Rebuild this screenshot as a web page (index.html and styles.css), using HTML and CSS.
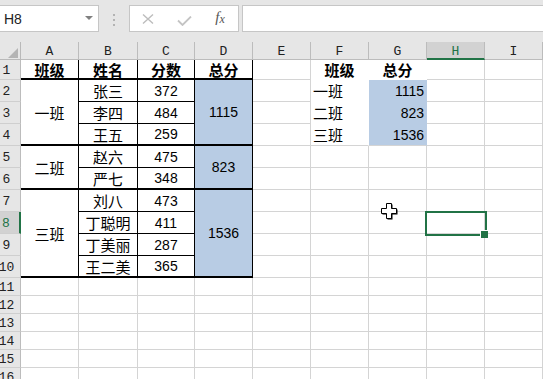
FILE: index.html
```html
<!DOCTYPE html>
<html lang="zh">

<head>
    <meta charset="utf-8">
    <meta name="viewport" content="width=device-width, initial-scale=1.0">
    <title>班级总分</title>
    <link rel="stylesheet" href="styles.css">
</head>

<body>

    <header class="formula-bar">
        <div class="name-box">H8<span class="caret"></span></div>
        <div class="grip"><i></i><i></i><i></i></div>
        <div class="fx-box">
            <span class="fx-btn">
                <svg width="12" height="10" viewBox="0 0 12 10"><path d="M1 0.5 L11 9.5 M11 0.5 L1 9.5" stroke="#bdbdbd" stroke-width="1.4" fill="none"/></svg>
            </span>
            <span class="fx-btn check">
                <svg width="15" height="10" viewBox="0 0 15 10"><path d="M1 4.5 L5.5 9 L14 0.5" stroke="#c4c4c4" stroke-width="1.8" fill="none"/></svg>
            </span>
            <span class="fx-btn fx"><i>f</i><i class="x">x</i></span>
        </div>
        <div class="formula-input"></div>
    </header>

    <section class="sheet">
        <div class="corner"></div>
        <div class="hd">A</div>
        <div class="hd">B</div>
        <div class="hd">C</div>
        <div class="hd">D</div>
        <div class="hd">E</div>
        <div class="hd">F</div>
        <div class="hd">G</div>
        <div class="hd on">H</div>
        <div class="hd">I</div>

        <!-- 1 -->
        <div class="rh">1</div>
        <div class="cell box end zh bold">班级</div>
        <div class="cell box end zh bold">姓名</div>
        <div class="cell box end zh bold">分数</div>
        <div class="cell box end zh bold">总分</div>
        <div class="cell"></div>
        <div class="cell plain zh bold">班级</div>
        <div class="cell plain zh bold">总分</div>
        <div class="cell"></div>
        <div class="cell"></div>

        <!-- 2 -->
        <div class="rh">2</div>
        <div class="cell box end zh span3">一班</div>
        <div class="cell box zh">张三</div>
        <div class="cell box">372</div>
        <div class="cell box end blue span3">1115</div>
        <div class="cell"></div>
        <div class="cell plain zh left">一班</div>
        <div class="cell plain blue right">1115</div>
        <div class="cell"></div>
        <div class="cell"></div>

        <!-- 3 -->
        <div class="rh">3</div>
        <div class="cell box zh">李四</div>
        <div class="cell box">484</div>
        <div class="cell"></div>
        <div class="cell plain zh left">二班</div>
        <div class="cell plain blue right">823</div>
        <div class="cell"></div>
        <div class="cell"></div>

        <!-- 4 -->
        <div class="rh">4</div>
        <div class="cell box end zh">王五</div>
        <div class="cell box end">259</div>
        <div class="cell"></div>
        <div class="cell plain gl zh left">三班</div>
        <div class="cell plain gl blue right">1536</div>
        <div class="cell"></div>
        <div class="cell"></div>

        <!-- 5 -->
        <div class="rh">5</div>
        <div class="cell box end zh span2">二班</div>
        <div class="cell box zh">赵六</div>
        <div class="cell box">475</div>
        <div class="cell box end blue span2">823</div>
        <div class="cell"></div>
        <div class="cell"></div>
        <div class="cell"></div>
        <div class="cell"></div>
        <div class="cell"></div>

        <!-- 6 -->
        <div class="rh">6</div>
        <div class="cell box end zh">严七</div>
        <div class="cell box end">348</div>
        <div class="cell"></div>
        <div class="cell"></div>
        <div class="cell"></div>
        <div class="cell"></div>
        <div class="cell"></div>

        <!-- 7 -->
        <div class="rh">7</div>
        <div class="cell box end zh span4">三班</div>
        <div class="cell box zh">刘八</div>
        <div class="cell box">473</div>
        <div class="cell box end blue span4">1536</div>
        <div class="cell"></div>
        <div class="cell"></div>
        <div class="cell"></div>
        <div class="cell"></div>
        <div class="cell"></div>

        <!-- 8 -->
        <div class="rh on">8</div>
        <div class="cell box zh">丁聪明</div>
        <div class="cell box">411</div>
        <div class="cell"></div>
        <div class="cell"></div>
        <div class="cell"></div>
        <div class="cell sel"></div>
        <div class="cell"></div>

        <!-- 9 -->
        <div class="rh">9</div>
        <div class="cell box zh">丁美丽</div>
        <div class="cell box">287</div>
        <div class="cell"></div>
        <div class="cell"></div>
        <div class="cell"></div>
        <div class="cell"></div>
        <div class="cell"></div>

        <!-- 10 -->
        <div class="rh">10</div>
        <div class="cell box end zh">王二美</div>
        <div class="cell box end">365</div>
        <div class="cell"></div>
        <div class="cell"></div>
        <div class="cell"></div>
        <div class="cell"></div>
        <div class="cell"></div>

        <!-- 11 - 16 -->
        <div class="rh">11</div>
        <div class="cell"></div><div class="cell"></div><div class="cell"></div>
        <div class="cell"></div><div class="cell"></div><div class="cell"></div>
        <div class="cell"></div><div class="cell"></div><div class="cell"></div>

        <div class="rh">12</div>
        <div class="cell"></div><div class="cell"></div><div class="cell"></div>
        <div class="cell"></div><div class="cell"></div><div class="cell"></div>
        <div class="cell"></div><div class="cell"></div><div class="cell"></div>

        <div class="rh">13</div>
        <div class="cell"></div><div class="cell"></div><div class="cell"></div>
        <div class="cell"></div><div class="cell"></div><div class="cell"></div>
        <div class="cell"></div><div class="cell"></div><div class="cell"></div>

        <div class="rh">14</div>
        <div class="cell"></div><div class="cell"></div><div class="cell"></div>
        <div class="cell"></div><div class="cell"></div><div class="cell"></div>
        <div class="cell"></div><div class="cell"></div><div class="cell"></div>

        <div class="rh">15</div>
        <div class="cell"></div><div class="cell"></div><div class="cell"></div>
        <div class="cell"></div><div class="cell"></div><div class="cell"></div>
        <div class="cell"></div><div class="cell"></div><div class="cell"></div>

        <div class="rh">16</div>
        <div class="cell"></div><div class="cell"></div><div class="cell"></div>
        <div class="cell"></div><div class="cell"></div><div class="cell"></div>
        <div class="cell"></div><div class="cell"></div><div class="cell"></div>
    </section>

    <!-- mouse pointer -->
    <svg class="pointer" width="17" height="17" viewBox="0 0 17 17">
        <path d="M6.5 1.5 H11.5 V6.5 H16.5 V11.5 H11.5 V16.5 H6.5 V11.5 H1.5 V6.5 H6.5 Z" fill="#000"/>
        <path d="M5.5 0.5 H10.5 V5.5 H15.5 V10.5 H10.5 V15.5 H5.5 V10.5 H0.5 V5.5 H5.5 Z" fill="#fff" stroke="#000" stroke-width="1"/>
    </svg>

</body></html>
```

FILE: styles.css
```css
* {
    box-sizing: border-box;
}

body {
    margin: 0;
    width: 543px;
    height: 379px;
    overflow: hidden;
    background: #fff;
    position: relative;
    font-family: "Liberation Sans", "Noto Sans CJK SC", sans-serif;
}

/* formula bar */

.formula-bar {
    display: flex;
    align-items: flex-start;
    height: 42px;
    padding-top: 5px;
    background: #e6e6e6;
}

.name-box {
    position: relative;
    display: flex;
    align-items: center;
    width: 99px;
    height: 27px;
    padding-left: 4px;
    background: #fff;
    border: 1px solid #c6c6c6;
    border-left: 0;
    font-size: 14px;
    color: #222;
}

.caret {
    position: absolute;
    left: 85px;
    top: 10px;
    border-left: 4px solid transparent;
    border-right: 4px solid transparent;
    border-top: 4px solid #808080;
}

.grip {
    width: 30px;
    display: flex;
    flex-direction: column;
    align-items: center;
    gap: 3px;
    padding-top: 9px;
}

.grip i {
    width: 2px;
    height: 2px;
    background: #b3b3b3;
}

.fx-box {
    display: flex;
    width: 110px;
    height: 27px;
    background: #fff;
    border: 1px solid #c6c6c6;
}

.fx-btn {
    width: 36px;
    display: flex;
    align-items: center;
    justify-content: center;
}

.fx-btn.check {
    padding-top: 4px;
}

.fx {
    font-family: "Liberation Serif", serif;
    color: #555;
    font-size: 15px;
    padding-bottom: 2px;
}

.fx .x {
    font-size: 12px;
    margin-top: 4px;
}

.formula-input {
    flex: 1;
    height: 27px;
    margin-left: 3px;
    background: #fff;
    border: 1px solid #c6c6c6;
    border-right: 0;
}

/* sheet */

.sheet {
    display: grid;
    grid-template-columns: 21px 58px 59px 57px 58px 58px 58px 58px 58px 1fr;
    grid-template-rows: 18px 20px repeat(9, 22px) repeat(6, 18px);
}

.corner,
.hd,
.rh {
    background: #e6e6e6;
    display: flex;
    align-items: center;
    justify-content: center;
    font-family: "Liberation Mono", monospace;
    font-size: 13px;
    color: #222;
    line-height: 1;
}

.corner {
    position: relative;
    border-right: 1px solid #b9b9b9;
    border-bottom: 1px solid #b9b9b9;
}

.corner::after {
    content: "";
    position: absolute;
    right: 2px;
    bottom: 1px;
    border-left: 10px solid transparent;
    border-bottom: 10px solid #b4b4b4;
}

.hd {
    border-right: 1px solid #bcbcbc;
    border-bottom: 1px solid #bcbcbc;
    padding-top: 2px;
}

.rh {
    border-right: 1px solid #bcbcbc;
    border-bottom: 1px solid #cfcfcf;
    padding-right: 7px;
    padding-top: 2px;
}

.hd.on {
    background: #d2d2d2;
    color: #217346;
    border-bottom: 2px solid #217346;
}

.rh.on {
    background: #d2d2d2;
    color: #217346;
    border-right: 2px solid #217346;
}

.cell {
    display: flex;
    align-items: center;
    justify-content: center;
    border-right: 1px solid #d4d4d4;
    border-bottom: 1px solid #d4d4d4;
    font-size: 14px;
    line-height: 1;
    color: #000;
    white-space: nowrap;
}

.zh {
    font-family: "Noto Sans CJK SC", sans-serif;
    font-size: 15px;
}

.bold {
    font-weight: bold;
}

.box {
    border-color: #000;
}

.end {
    border-bottom-width: 2px;
}

.blue {
    background: #b8cce4;
}

.span2 {
    grid-row: span 2;
}

.span3 {
    grid-row: span 3;
}

.span4 {
    grid-row: span 4;
}

.plain {
    border-color: transparent;
}

.plain.gl {
    border-bottom-color: #d4d4d4;
}

.left {
    justify-content: flex-start;
    padding-left: 2px;
}

.right {
    justify-content: flex-end;
    padding-right: 2px;
}

/* active cell */

.sel {
    position: relative;
}

.sel::after {
    content: "";
    position: absolute;
    left: -2px;
    top: -1px;
    right: -3px;
    bottom: -3px;
    border: 2px solid #217346;
}

.sel::before {
    content: "";
    position: absolute;
    right: -4px;
    bottom: -5px;
    width: 7px;
    height: 7px;
    background: #217346;
    border-top: 1px solid #fff;
    border-left: 1px solid #fff;
    z-index: 1;
}

.pointer {
    position: absolute;
    left: 381px;
    top: 203px;
}
```
